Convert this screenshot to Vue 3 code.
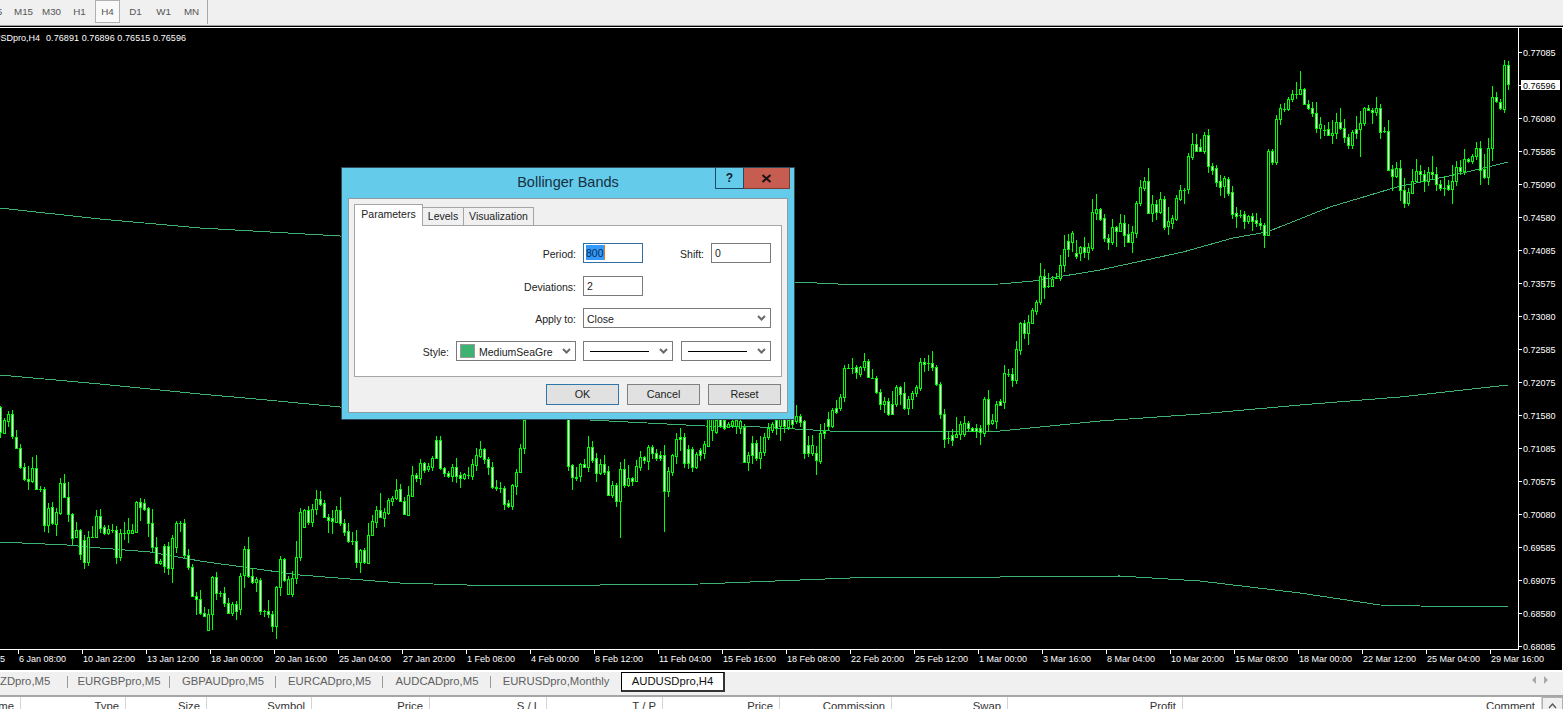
<script setup>
const raw = `0W407,432 4B420,433 8B414,421 12W414,436 16W437,448 20W448,467 24W467,479 28W479,481 32B468,481 36W468,489 40W489,489 44W489,525 48B508,525 52W507,523 56B512,524 60B483,513 64W483,497 68W497,514 72W514,538 76B530,537 80W530,554 84W540,562 88B537,562 92W537,537 96B516,537 100W516,528 104W527,533 108B529,533 112W530,530 116W530,557 120B533,557 124W533,533 128B530,533 132B530,533 136B502,532 140W502,507 144W503,509 148W508,523 152W523,547 156W547,563 160B561,563 164W546,566 168W546,568 172B538,568 176B523,547 180W523,523 184W523,555 188W555,567 192W567,596 196W596,599 200W599,613 204W613,616 208B614,630 212B577,614 216W577,593 220W593,593 224W593,603 228W603,613 232B604,613 236W604,611 240B576,609 244B549,575 248W549,576 252W576,582 256B579,582 260W580,611 264W611,611 268W611,614 272W614,626 276B587,626 280B559,587 284W559,580 288B579,594 292B578,594 296B557,578
300B512,557 304B510,527 308W510,522 312B509,522 316B499,509 320W499,504 324W503,517 328W517,520 332W518,521 336B510,522 340W510,523 344W523,532 348W531,541 352W541,541 356W541,562 360B550,562 364W550,562 368B535,563 372B521,535 376B510,522 380W510,517 384B512,518 388B500,513 392B498,501 396B490,498 400W489,501 404W501,514 408B495,515 412B475,496 416W475,478 420B463,478 424W463,470 428B466,469 432B458,467 436W440,458 440W440,468 444W468,473 448W473,476 452B467,476 456W467,476 460W475,478 464B474,478 468W475,475 472B464,476 476B455,465 480B449,456 484W449,459 488W459,467 492W467,487 496W487,488 500W488,488 504W488,504 508W503,506 512B485,506 516B472,486 520B448,472 524B420,448 568W400,466 572W465,477 576W477,478 580B464,476 584W464,467 588B447,467 592W447,460 596W458,473 600B464,473 604W464,472 608W471,495 612B485,495 616W485,501 620B469,501 624W469,485 628B478,485 632W478,481 636B466,481 640B457,467 644W457,460 648B447,461 652W447,453 656W453,458 660W455,458 664W455,491 668B471,491 672B455,472 676B439,456 680W437,439 684W437,463 688W449,463 692W449,467 696B454,467 700W450,455
704B444,453 708B415,446 712B415,430 716B420,432 720W415,426 724W420,428 728B424,427 732B421,425 736B420,426 740B421,428 744W427,462 748B455,462 752W443,455 756W443,458 760B452,458 764B437,452 768B428,437 772B424,430 776W420,428 780B418,426 784W410,426 788B420,427 792W418,424 796B416,421 800W416,422 804W421,453 808W445,453 812B445,453 816W453,460 820B433,461 824W431,433 828W419,426 832B410,426 836W408,412 840B397,408 844B368,397 848W368,368 852W368,368 856W367,372 860B367,374 864B361,367 868W361,377 872W378,378 876W378,392 880W392,404 884B401,404 888W401,414 892W404,414 896B387,404 900W387,394 904W393,408 908B399,408 912B393,399 916B387,393 920B362,388 924W362,364 928W363,363 932W363,367 936W367,384 940W384,414 944W414,439 948W438,438 952W435,440 956B434,437 960B424,434 964B423,434 968W423,428 972W428,431 976W428,431 980W428,432 984B399,433 988W399,424 992B420,423 996B404,421 1000W401,405 1004B373,402 1008W374,374 1012W374,380 1016B349,380 1020B323,350 1024W323,333 1028B322,333 1032B310,323 1036B302,311 1040B276,302 1044W276,287 1048W286,286 1052B279,286 1056W278,278 1060B265,278 1064B249,265 1068W241,249 1072B233,242 1076W253,256 1080B247,253 1084W247,252 1088B247,252 1092B212,248 1096B209,213 1100W209,219 1104W218,238 1108W238,242 1112B227,242 1116W227,231 1120B223,231 1124W223,235 1128W234,242 1132B232,242 1136B203,233 1140B187,203 1144B181,188 1148W181,213 1152B204,213 1156W204,212 1160B199,212 1164W199,227 1168B221,226 1172B218,223 1176B198,219 1180B190,199 1184W190,190 1188B156,189 1192B144,157 1196W144,151 1200W147,151 1204B135,151 1208W135,166 1212W166,170 1216W168,182 1220W181,187 1224B178,186 1228W179,193 1232W192,214 1236W213,216 1240W215,215 1244W214,221 1248B216,221 1252W216,221 1256W220,223 1260W223,225 1264W225,235 1268B151,235 1272W151,162 1276B119,162 1280B108,119 1284W109,109 1288B99,109 1292B94,99 1296W94,94 1300B89,94 1304W89,104 1308W104,108 1312W108,113 1316W113,128 1320B124,128 1324W130,130 1328W129,135 1332B133,135 1336B122,133 1340W122,128 1344W128,137 1348W137,145 1352B132,145 1356W129,133 1360B123,129 1364B108,123 1368W108,110 1372W110,112 1376B108,112 1380W108,132 1384W131,131 1388W131,170 1392W169,176 1396B168,176 1400W168,190 1404W190,203 1408B192,203 1412B181,193 1416B171,181 1420W171,174 1424W174,181 1428B172,181 1432W172,174 1436W174,184 1440W184,188 1444W188,188 1448W185,189 1452B181,189 1456B167,181 1460W167,171 1464B159,171 1468W159,161 1472B156,161 1476B148,156 1480W148,170 1484W169,177 1488B148,177 1492B97,148 1496W97,101 1500W102,108 1504B65,109 1508W65,84`

const wickOverride = {
  620: [null, 538], 664: [null, 532], 1504: [60, null], 1300: [71, null], 1264: [null, 248],
  1208: [129, null], 816: [null, 475], 1360: [null, 157], 524: [null, 454], 1508: [null, 90]
}

let seed = 19
function rnd() {
  seed = (seed * 1664525 + 1013904223) >>> 0
  return seed / 4294967296
}

let wickPath = ''
let framePath = ''
let whitePath = ''
let blackPath = ''
for (const m of raw.matchAll(/(\d+)([WB])(\d+),(\d+)/g)) {
  const x = +m[1]
  const top = +m[3]
  const bot = +m[4]
  const o = wickOverride[x] || []
  const up = Math.round(rnd() * rnd() * 17) + 1
  const down = Math.round(rnd() * rnd() * 17) + 1
  const hi = o[0] ?? top - up
  const lo = o[1] ?? bot + down
  wickPath += `M${x} ${hi}h1V${lo}h-1z`
  framePath += `M${x - 1} ${top}h3V${bot + 1}h-3z`
  if (bot - top >= 2) {
    const inner = `M${x} ${top + 1}h1V${bot}h-1z`
    if (m[2] === 'W') whitePath += inner
    else blackPath += inner
  }
}

function pts(a) {
  return a.map((p) => p.join(',')).join(' ')
}
const upper = pts([[0,208],[100,219],[200,228],[340,236],[795,282],[860,285],[1000,284],[1033,281],[1100,270],[1183,252],[1233,238],[1267,232],[1330,207],[1397,187],[1463,173],[1508,162]])
const middle = pts([[0,375],[100,384],[200,394],[267,400],[340,407],[705,426],[760,427],[830,431],[1000,431],[1050,426],[1100,421],[1200,414],[1300,405],[1400,397],[1508,385]])
const lower = pts([[0,542],[67,545],[100,548],[150,552],[200,561],[250,568],[300,575],[400,583],[500,586],[600,585],[700,584],[850,578],[1000,577],[1120,576],[1200,581],[1300,593],[1380,605],[1420,606],[1508,607]])

const prices = ['0.77085', null, '0.76080', '0.75585', '0.75090', '0.74580', '0.74085', '0.73575', '0.73080', '0.72585', '0.72075', '0.71580', '0.71085', '0.70575', '0.70080', '0.69585', '0.69075', '0.68580', '0.68085']
  .map((t, i) => ({ t, y: 52 + i * 33 }))
  .filter((p) => p.t)

const dates = ['6 Jan 08:00', '10 Jan 22:00', '13 Jan 12:00', '18 Jan 00:00', '20 Jan 16:00', '25 Jan 04:00', '27 Jan 20:00', '1 Feb 08:00', '4 Feb 00:00', '8 Feb 12:00', '11 Feb 04:00', '15 Feb 16:00', '18 Feb 08:00', '22 Feb 20:00', '25 Feb 12:00', '1 Mar 00:00', '3 Mar 16:00', '8 Mar 04:00', '10 Mar 20:00', '15 Mar 08:00', '18 Mar 00:00', '22 Mar 12:00', '25 Mar 04:00', '29 Mar 16:00']
  .map((t, i) => ({ t, x: 18 + i * 64 }))

const periods = ['M5', 'M15', 'M30', 'H1', 'H4', 'D1', 'W1', 'MN']
const tabs = ['ZDpro,M5', 'EURGBPpro,M5', 'GBPAUDpro,M5', 'EURCADpro,M5', 'AUDCADpro,M5', 'EURUSDpro,Monthly', 'AUDUSDpro,H4']
const columns = ['Time', 'Type', 'Size', 'Symbol', 'Price', 'S / L', 'T / P', 'Price', 'Commission', 'Swap', 'Profit', 'Comment']
</script>

<template>
  <div class="screen">
    <header class="toolbar">
      <button v-for="p in periods" :key="p" class="period" :class="{ on: p === 'H4' }">{{ p }}</button>
      <span class="tool-sep"></span>
    </header>

    <svg class="chart" width="1563" height="644" viewBox="0 26 1563 644">
      <rect x="0" y="27" width="1563" height="1" fill="#fff" />
      <rect x="1518" y="27" width="1" height="623" fill="#fff" />
      <rect x="0" y="649" width="1519" height="1" fill="#fff" />
      <rect x="1562" y="27" width="1" height="643" fill="#fff" />

      <g shape-rendering="crispEdges">
        <polyline :points="upper" class="band" />
        <polyline :points="middle" class="band" />
        <polyline :points="lower" class="band" />
        <path :d="wickPath" fill="#00ff00" />
        <path :d="framePath" fill="#00ff00" />
        <path :d="whitePath" fill="#ffffff" />
        <path :d="blackPath" fill="#000000" />
      </g>

      <text x="40" y="41" text-anchor="end" class="lbl">AUDUSDpro,H4</text>
      <text x="46" y="41" textLength="140" class="lbl">0.76891 0.76896 0.76515 0.76596</text>

      <g v-for="p in prices" :key="p.t">
        <rect x="1519" :y="p.y" width="3" height="1" fill="#fff" />
        <text x="1523" :y="p.y + 4" class="lbl">{{ p.t }}</text>
      </g>
      <rect x="1519" y="85" width="3" height="1" fill="#fff" />
      <rect x="1521" y="80" width="39" height="10" fill="#fff" />
      <text x="1523" y="89" class="lbl dark">0.76596</text>

      <text x="0" y="662" class="lbl">5</text>
      <g v-for="d in dates" :key="d.t">
        <rect :x="d.x" y="650" width="1" height="4" fill="#fff" />
        <text :x="d.x + 1" y="662" class="lbl">{{ d.t }}</text>
      </g>
    </svg>

    <nav class="tabstrip">
      <span v-for="t in tabs" :key="t" class="chart-tab" :class="{ active: t === 'AUDUSDpro,H4' }">{{ t }}</span>
      <span class="tab-arrows">
        <svg width="4" height="8" viewBox="0 0 4 8"><path d="M4 0v8L0 4z" fill="#a8a8a8" /></svg>
        <svg width="4" height="8" viewBox="0 0 4 8"><path d="M0 0v8l4-4z" fill="#a8a8a8" /></svg>
      </span>
    </nav>

    <div class="table-head">
      <span v-for="(c, i) in columns" :key="i" class="cell">{{ c }}</span>
      <span class="scroll-up">
        <svg width="9" height="6" viewBox="0 0 9 6"><path d="M1 5l3.500-4 3.500 4" fill="none" stroke="#555" stroke-width="1.300" /></svg>
      </span>
    </div>

    <section class="dialog">
      <div class="titlebar">Bollinger Bands</div>
      <div class="win-buttons">
        <span class="win-help">?</span>
        <span class="win-close">
          <svg width="11" height="9" viewBox="0 0 11 9"><path d="M1.500 1l8 7M9.500 1l-8 7" stroke="#1a1414" stroke-width="2" fill="none" /></svg>
        </span>
      </div>
      <div class="client">
        <div class="dlg-tabs">
          <span class="dlg-tab current">Parameters</span>
          <span class="dlg-tab">Levels</span>
          <span class="dlg-tab">Visualization</span>
        </div>
        <div class="page">
          <div class="row first">
            <label class="lab wide">Period:</label>
            <div class="field focus"><span class="sel">800</span></div>
            <label class="lab short">Shift:</label>
            <div class="field">0</div>
          </div>
          <div class="row second">
            <label class="lab wide">Deviations:</label>
            <div class="field">2</div>
          </div>
          <div class="row third">
            <label class="lab wide">Apply to:</label>
            <div class="combo applyto">
              <span class="combo-text">Close</span>
              <svg class="chev" width="9" height="6" viewBox="0 0 9 6"><path d="M1 1l3.500 3.500L8 1" fill="none" stroke="#6a6a6a" stroke-width="2" /></svg>
            </div>
          </div>
          <div class="row fourth">
            <label class="lab narrow">Style:</label>
            <div class="combo color">
              <i class="swatch"></i>
              <span class="combo-text">MediumSeaGre</span>
              <svg class="chev" width="9" height="6" viewBox="0 0 9 6"><path d="M1 1l3.500 3.500L8 1" fill="none" stroke="#6a6a6a" stroke-width="2" /></svg>
            </div>
            <div class="combo line">
              <i class="stroke"></i>
              <svg class="chev" width="9" height="6" viewBox="0 0 9 6"><path d="M1 1l3.500 3.500L8 1" fill="none" stroke="#6a6a6a" stroke-width="2" /></svg>
            </div>
            <div class="combo line">
              <i class="stroke"></i>
              <svg class="chev" width="9" height="6" viewBox="0 0 9 6"><path d="M1 1l3.500 3.500L8 1" fill="none" stroke="#6a6a6a" stroke-width="2" /></svg>
            </div>
          </div>
        </div>
        <div class="actions">
          <button class="act default">OK</button>
          <button class="act">Cancel</button>
          <button class="act">Reset</button>
        </div>
      </div>
    </section>
  </div>
</template>

<style>
html, body { margin: 0; overflow: hidden; background: #f0f0f0; }
</style>

<style scoped>
.screen {
  position: relative;
  width: 1563px;
  height: 709px;
  overflow: hidden;
  display: flex;
  flex-direction: column;
  font-family: "Liberation Sans", Arial, sans-serif;
  font-size: 10.5px;
  color: #222;
  background: #f0f0f0;
}
.toolbar {
  flex: 0 0 25px;
  box-sizing: content-box;
  height: 25px;
  display: flex;
  gap: 3px;
  padding: 1px 0 0;
  margin-top: -1px;
  margin-left: -17px;
  border-bottom: 1px solid #a0a0a0;
  width: 1580px;
}
.period {
  width: 25px;
  height: 23px;
  padding: 0;
  margin: 0;
  border: 0;
  background: none;
  font: 9.800px "Liberation Sans", Arial, sans-serif;
  color: #555;
}
.period.on {
  border: 1px solid #b0b0b0;
  background: #f9f9f9;
}
.tool-sep {
  width: 1px;
  height: 25px;
  margin-top: -1px;
  background: #a8a8a8;
}
.chart {
  display: block;
  flex: 0 0 644px;
  background: #000;
}
.band {
  fill: none;
  stroke: #3cb371;
  stroke-width: 1;
}
.lbl {
  font: 9px "Liberation Sans", Arial, sans-serif;
  fill: #fff;
}
.lbl.dark { fill: #000; }
.tabstrip {
  flex: 0 0 25px;
  display: grid;
  grid-template-columns: 68px 102px 106px 107px 108px 130px 104px 1fr;
  grid-template-rows: 23px;
  box-sizing: border-box;
  height: 25px;
  border-top: 2px solid #fff;
  background: #f0f0f0;
}
.chart-tab {
  position: relative;
  height: 19px;
  line-height: 19px;
  text-align: center;
  color: #606060;
  font-size: 11.300px;
  white-space: nowrap;
  overflow: hidden;
}
.chart-tab:first-child { text-align: left; }
.chart-tab:not(.active):not(:nth-child(6))::after {
  content: "";
  position: absolute;
  right: 0;
  top: 4px;
  height: 12px;
  width: 1px;
  background: #999;
}
.chart-tab.active {
  box-sizing: border-box;
  background: #fff;
  color: #111;
  border: 1px solid #000;
  border-right: 2px solid #333;
  border-bottom: 2px solid #333;
  height: 20px;
  line-height: 17px;
}
.tab-arrows {
  display: flex;
  justify-content: flex-end;
  align-items: center;
  gap: 8px;
  padding: 0 15px 7px 0;
}
.table-head {
  flex: 0 0 14px;
  display: grid;
  grid-template-columns: 21px 105px 81px 105px 118px 117px 116px 117px 112px 116px 175px 359px 21px;
  border-top: 2px solid #a6a6a6;
  background: #fff;
  box-sizing: border-box;
  height: 14px;
}
.cell {
  box-sizing: border-box;
  border-right: 1px solid #d4d4d4;
  display: flex;
  justify-content: flex-end;
  padding: 3px 6px 0 0;
  color: #333;
  font-size: 11.300px;
  white-space: nowrap;
  overflow: hidden;
  line-height: 12px;
}
.scroll-up {
  display: flex;
  justify-content: center;
  padding-top: 5px;
  background: #f0f0f0;
  border: 1px solid #b0b0b0;
}

.dialog {
  position: absolute;
  left: 341px;
  top: 167px;
  box-sizing: border-box;
  width: 454px;
  height: 253px;
  background: #65cbeb;
  border: 1px solid #2e4a5a;
  display: flex;
  flex-direction: column;
}
.titlebar {
  flex: 0 0 30px;
  text-align: center;
  line-height: 29px;
  font-size: 14.500px;
  color: #16303f;
}
.win-buttons {
  position: absolute;
  right: 4px;
  top: 0;
  display: flex;
  height: 21px;
}
.win-help {
  box-sizing: border-box;
  width: 29px;
  border: 1px solid #1c4a66;
  border-top: 0;
  text-align: center;
  font: bold 12px/20px "Liberation Sans", Arial, sans-serif;
  color: #10202c;
}
.win-close {
  box-sizing: border-box;
  width: 46px;
  background: #c75c50;
  border-bottom: 1px solid #7c3a32;
  border-right: 1px solid #7c3a32;
  display: flex;
  align-items: center;
  justify-content: center;
}
.client {
  margin: 0 6px;
  box-sizing: border-box;
  height: 215px;
  background: #f0f0f0;
  border: 1px solid #8d9ba5;
  padding: 6px 5px 0;
}
.dlg-tabs {
  display: flex;
  height: 20px;
  align-items: flex-end;
}
.dlg-tab {
  box-sizing: border-box;
  height: 18px;
  line-height: 17px;
  padding: 0;
  text-align: center;
  background: #f0f0f0;
  border: 1px solid #a5a5a5;
  border-bottom: 0;
  margin-left: -1px;
  width: 42px;
  position: relative;
}
.dlg-tab:nth-child(3) { width: 71px; }
.dlg-tab.current {
  width: 69px;
  margin-left: 0;
  height: 22px;
  margin-bottom: -1px;
  line-height: 18px;
  background: #fff;
  z-index: 1;
  padding-bottom: 2px;
}
.page {
  box-sizing: border-box;
  width: 428px;
  height: 152px;
  background: #fff;
  border: 1px solid #a5a5a5;
  padding-top: 17px;
}
.row {
  display: flex;
  align-items: center;
  height: 20px;
}
.row.second { margin-top: 13px; }
.row.third { margin-top: 12px; }
.row.fourth { margin-top: 13px; }
.lab {
  flex: none;
  text-align: right;
  margin-right: 7px;
  padding-top: 1px;
}
.lab.wide { width: 221px; }
.lab.short { width: 61px; }
.lab.narrow { width: 94px; }
.field {
  box-sizing: border-box;
  width: 60px;
  height: 20px;
  border: 1px solid #7a7a7a;
  padding: 0 2px 0 3px;
  line-height: 19px;
  background: #fff;
}
.field.focus { border-color: #2f6e9e; padding-left: 2px; }
.sel {
  display: inline-block;
  height: 15px;
  line-height: 17px;
  margin-top: 1px;
  background: #3399ff;
  color: #082a48;
  border-right: 1px solid #e07a10;
  vertical-align: top;
}
.combo {
  position: relative;
  box-sizing: border-box;
  height: 20px;
  border: 1px solid #7a7a7a;
  background: #fff;
  display: flex;
  align-items: center;
  margin-right: 7px;
}
.combo-text { padding-top: 1px; }
.combo.applyto { width: 188px; margin-right: 0; padding-left: 3px; }
.combo.color { width: 120px; padding-left: 3px; }
.combo.line { width: 90px; padding-left: 6px; }
.combo.line:last-child { margin: 0 0 0 1px; }
.swatch {
  box-sizing: border-box;
  width: 15px;
  height: 14px;
  background: #3cb371;
  border: 1px solid #9a9a9a;
  margin-right: 4px;
}
.stroke {
  width: 59px;
  height: 1px;
  background: #000;
}
.chev {
  position: absolute;
  right: 4px;
  top: 6px;
}
.actions {
  display: flex;
  justify-content: flex-end;
  gap: 8px;
  margin-top: 7px;
  padding-right: 1px;
}
.act {
  box-sizing: border-box;
  width: 73px;
  height: 21px;
  padding: 0 0 2px;
  margin: 0;
  border: 1px solid #808080;
  background: #e1e1e1;
  font: 10.800px "Liberation Sans", Arial, sans-serif;
  color: #222;
}
.act.default { border-color: #2f77ab; }
</style>
